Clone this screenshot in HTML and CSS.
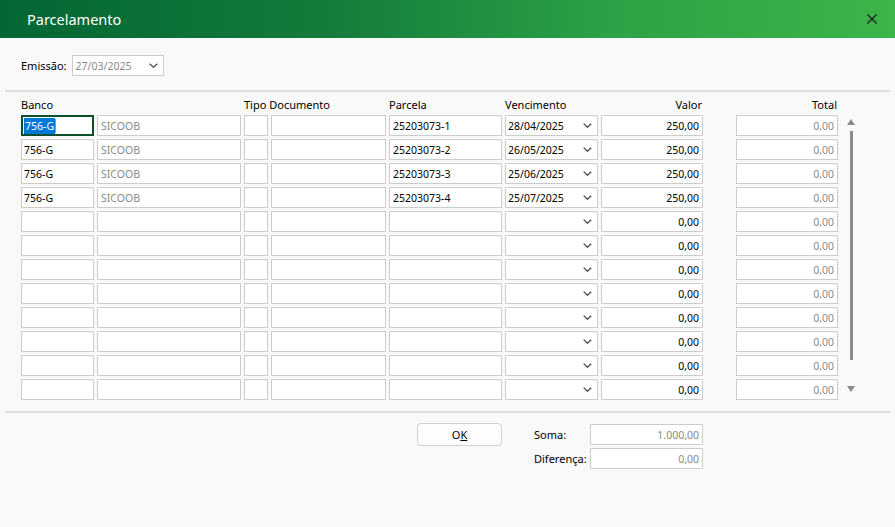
FILE: index.html
```html
<!DOCTYPE html>
<html>
<head>
    <meta charset="utf-8">
    <title>Parcelamento</title>
    <link rel="stylesheet" href="styles.css">
</head>
<body>
    <div class="window">
        <div class="titlebar">
            <span class="titlebar-title">Parcelamento</span>
            <svg class="titlebar-close" width="10" height="10" viewBox="0 0 10 10">
                <path d="M0.5 0.5 L9.5 9.5 M9.5 0.5 L0.5 9.5" stroke="#1b1b1b" stroke-width="1.2" fill="none"/>
            </svg>
        </div>

        <div class="emissao">
            <span class="label">Emissão:</span>
            <div class="field field-select field-emissao">
                <span class="muted">27/03/2025</span>
                <svg class="chevron" width="9" height="5" viewBox="0 0 9 5"><polyline points="0.7,0.7 4.5,4.2 8.3,0.7" stroke="#555" stroke-width="1.4" fill="none"/></svg>
            </div>
        </div>

        <div class="separator"></div>

        <div class="table-wrap">
            <div class="grid">
                <div class="head">Banco</div>
                <div class="head"></div>
                <div class="head head-tipo">Tipo Documento</div>
                <div class="head"></div>
                <div class="head">Parcela</div>
                <div class="head">Vencimento</div>
                <div class="head right">Valor</div>
                <div class="head right col-total">Total</div>

                <div class="field field-focus"><span class="sel">756-G</span><span class="caret"></span></div>
                <div class="field muted">SICOOB</div>
                <div class="field"></div>
                <div class="field"></div>
                <div class="field">25203073-1</div>
                <div class="field field-select">28/04/2025<svg class="chevron" width="9" height="5" viewBox="0 0 9 5"><polyline points="0.7,0.7 4.5,4.2 8.3,0.7" stroke="#555" stroke-width="1.4" fill="none"/></svg></div>
                <div class="field right">250,00</div>
                <div class="field right muted col-total">0,00</div>

                <div class="field">756-G</div>
                <div class="field muted">SICOOB</div>
                <div class="field"></div>
                <div class="field"></div>
                <div class="field">25203073-2</div>
                <div class="field field-select">26/05/2025<svg class="chevron" width="9" height="5" viewBox="0 0 9 5"><polyline points="0.7,0.7 4.5,4.2 8.3,0.7" stroke="#555" stroke-width="1.4" fill="none"/></svg></div>
                <div class="field right">250,00</div>
                <div class="field right muted col-total">0,00</div>

                <div class="field">756-G</div>
                <div class="field muted">SICOOB</div>
                <div class="field"></div>
                <div class="field"></div>
                <div class="field">25203073-3</div>
                <div class="field field-select">25/06/2025<svg class="chevron" width="9" height="5" viewBox="0 0 9 5"><polyline points="0.7,0.7 4.5,4.2 8.3,0.7" stroke="#555" stroke-width="1.4" fill="none"/></svg></div>
                <div class="field right">250,00</div>
                <div class="field right muted col-total">0,00</div>

                <div class="field">756-G</div>
                <div class="field muted">SICOOB</div>
                <div class="field"></div>
                <div class="field"></div>
                <div class="field">25203073-4</div>
                <div class="field field-select">25/07/2025<svg class="chevron" width="9" height="5" viewBox="0 0 9 5"><polyline points="0.7,0.7 4.5,4.2 8.3,0.7" stroke="#555" stroke-width="1.4" fill="none"/></svg></div>
                <div class="field right">250,00</div>
                <div class="field right muted col-total">0,00</div>

                <div class="field"></div>
                <div class="field"></div>
                <div class="field"></div>
                <div class="field"></div>
                <div class="field"></div>
                <div class="field field-select"><svg class="chevron" width="9" height="5" viewBox="0 0 9 5"><polyline points="0.7,0.7 4.5,4.2 8.3,0.7" stroke="#555" stroke-width="1.4" fill="none"/></svg></div>
                <div class="field right">0,00</div>
                <div class="field right muted col-total">0,00</div>

                <div class="field"></div>
                <div class="field"></div>
                <div class="field"></div>
                <div class="field"></div>
                <div class="field"></div>
                <div class="field field-select"><svg class="chevron" width="9" height="5" viewBox="0 0 9 5"><polyline points="0.7,0.7 4.5,4.2 8.3,0.7" stroke="#555" stroke-width="1.4" fill="none"/></svg></div>
                <div class="field right">0,00</div>
                <div class="field right muted col-total">0,00</div>

                <div class="field"></div>
                <div class="field"></div>
                <div class="field"></div>
                <div class="field"></div>
                <div class="field"></div>
                <div class="field field-select"><svg class="chevron" width="9" height="5" viewBox="0 0 9 5"><polyline points="0.7,0.7 4.5,4.2 8.3,0.7" stroke="#555" stroke-width="1.4" fill="none"/></svg></div>
                <div class="field right">0,00</div>
                <div class="field right muted col-total">0,00</div>

                <div class="field"></div>
                <div class="field"></div>
                <div class="field"></div>
                <div class="field"></div>
                <div class="field"></div>
                <div class="field field-select"><svg class="chevron" width="9" height="5" viewBox="0 0 9 5"><polyline points="0.7,0.7 4.5,4.2 8.3,0.7" stroke="#555" stroke-width="1.4" fill="none"/></svg></div>
                <div class="field right">0,00</div>
                <div class="field right muted col-total">0,00</div>

                <div class="field"></div>
                <div class="field"></div>
                <div class="field"></div>
                <div class="field"></div>
                <div class="field"></div>
                <div class="field field-select"><svg class="chevron" width="9" height="5" viewBox="0 0 9 5"><polyline points="0.7,0.7 4.5,4.2 8.3,0.7" stroke="#555" stroke-width="1.4" fill="none"/></svg></div>
                <div class="field right">0,00</div>
                <div class="field right muted col-total">0,00</div>

                <div class="field"></div>
                <div class="field"></div>
                <div class="field"></div>
                <div class="field"></div>
                <div class="field"></div>
                <div class="field field-select"><svg class="chevron" width="9" height="5" viewBox="0 0 9 5"><polyline points="0.7,0.7 4.5,4.2 8.3,0.7" stroke="#555" stroke-width="1.4" fill="none"/></svg></div>
                <div class="field right">0,00</div>
                <div class="field right muted col-total">0,00</div>

                <div class="field"></div>
                <div class="field"></div>
                <div class="field"></div>
                <div class="field"></div>
                <div class="field"></div>
                <div class="field field-select"><svg class="chevron" width="9" height="5" viewBox="0 0 9 5"><polyline points="0.7,0.7 4.5,4.2 8.3,0.7" stroke="#555" stroke-width="1.4" fill="none"/></svg></div>
                <div class="field right">0,00</div>
                <div class="field right muted col-total">0,00</div>

                <div class="field"></div>
                <div class="field"></div>
                <div class="field"></div>
                <div class="field"></div>
                <div class="field"></div>
                <div class="field field-select"><svg class="chevron" width="9" height="5" viewBox="0 0 9 5"><polyline points="0.7,0.7 4.5,4.2 8.3,0.7" stroke="#555" stroke-width="1.4" fill="none"/></svg></div>
                <div class="field right">0,00</div>
                <div class="field right muted col-total">0,00</div>
            </div>

            <div class="scrollbar">
                <div class="scroll-arrow scroll-up"></div>
                <div class="scroll-thumb"></div>
                <div class="scroll-arrow scroll-down"></div>
            </div>
        </div>

        <div class="separator separator-bottom"></div>

        <div class="footer">
            <button class="button">O<u>K</u></button>
            <div class="totals">
                <span class="label">Soma:</span>
                <div class="field right muted">1.000,00</div>
                <span class="label">Diferença:</span>
                <div class="field right muted">0,00</div>
            </div>
        </div>
    </div>
</body>
</html>
```

FILE: styles.css
```css
:root {
    --window-background: #f9f9f9;
    --field-border: #cccccc;
    --muted-color: #8a8a8a;
    --focus-color: #0b4f2c;
    --select-color: #0078d7;
}

html, body {
    margin: 0;
    padding: 0;
    width: 100%;
    height: 100%;
    background: var(--window-background);
    font-family: 'Segoe UI', 'Noto Sans', sans-serif;
    color: #000;
    overflow: hidden;
}

* {
    box-sizing: border-box;
}

.window {
    width: 895px;
    height: 527px;
}

.titlebar {
    height: 38px;
    display: flex;
    align-items: center;
    justify-content: space-between;
    padding: 0 18px 0 27px;
    background: linear-gradient(to right, #046634 0%, #137a3b 35%, #2fa346 70%, #3cb54a 100%);
}

.titlebar-title {
    color: #fff;
    font-size: 14.5px;
    margin-top: -1px;
}

.titlebar-close {
    display: block;
}

.label {
    font-size: 11px;
}

.emissao {
    display: flex;
    align-items: center;
    gap: 5px;
    padding-left: 21px;
    margin-top: 17px;
}

.field {
    height: 21px;
    border: 1px solid var(--field-border);
    background: #fff;
    font-size: 10.5px;
    padding: 0 3px 0 2px;
    display: flex;
    align-items: center;
    white-space: nowrap;
    overflow: hidden;
}

.field.muted,
.muted {
    color: var(--muted-color);
}

.field.right {
    justify-content: flex-end;
    padding-right: 3px;
}

.field-select {
    padding-right: 5px;
}

.field-emissao {
    width: 92px;
    padding-left: 3px;
}

.chevron {
    display: block;
    margin-left: auto;
}

.field-focus {
    border: 2px solid var(--focus-color);
    padding-left: 1px;
}

.sel {
    background: var(--select-color);
    color: #fff;
    padding: 1px 1px;
}

.caret {
    width: 1px;
    height: 14px;
    background: #f08a24;
}

.separator {
    height: 2px;
    margin: 14px 5px 0 5px;
    background: #dedede;
}

.table-wrap {
    display: flex;
    padding-left: 21px;
    margin-top: 4px;
}

.grid {
    display: grid;
    grid-template-columns: 73px 144px 24px 115px 113px 93px 102px 132px;
    grid-template-rows: 16px;
    grid-auto-rows: 21px;
    gap: 3px;
}

.grid .field:nth-child(8n+2) {
    padding-left: 3px;
}

.grid .field:nth-child(8n+5) {
    padding-left: 3px;
}

.head {
    font-size: 11px;
    line-height: 16px;
    padding-top: 1px;
    white-space: nowrap;
}

.head.right {
    text-align: right;
    padding-right: 1px;
}

.head-tipo {
    overflow: visible;
}

.col-total {
    margin-left: 30px;
}

.scrollbar {
    display: flex;
    flex-direction: column;
    align-items: center;
    width: 8px;
    margin-left: 9px;
    padding-top: 23px;
}

.scroll-arrow {
    width: 0;
    height: 0;
    border-left: 4px solid transparent;
    border-right: 4px solid transparent;
}

.scroll-up {
    border-bottom: 6px solid #8a8a8a;
}

.scroll-down {
    border-top: 6px solid #8a8a8a;
    margin-top: 26px;
}

.scroll-thumb {
    width: 3px;
    height: 229px;
    margin-top: 6px;
    background: #8a8a8a;
}

.separator-bottom {
    margin-top: 11px;
}

.footer {
    display: flex;
    align-items: flex-start;
    padding-left: 417px;
    margin-top: 10px;
}

.button {
    width: 85px;
    height: 23px;
    border: 1px solid #d0d0d0;
    border-radius: 4px;
    background: #fdfdfd;
    font-family: inherit;
    font-size: 11px;
    color: #000;
    padding: 0;
}

.totals {
    display: grid;
    grid-template-columns: 56px 113px;
    grid-auto-rows: 21px;
    row-gap: 3px;
    align-items: center;
    margin-left: 32px;
    margin-top: 1px;
}
```
